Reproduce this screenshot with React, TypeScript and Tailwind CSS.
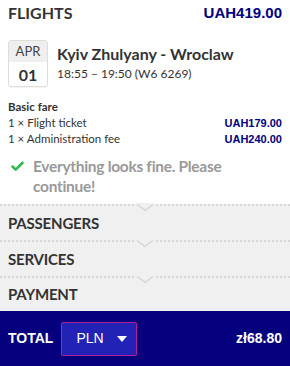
import { Check } from "lucide-react";

const sections = ["PASSENGERS", "SERVICES", "PAYMENT"];

function Notch() {
  return (
    <div className="absolute left-0 right-0 top-0 h-[8px]">
      <div className="absolute left-0 right-0 top-0 border-t-2 border-dotted border-[#d6d6d6]" />
      <svg className="absolute left-[136px] top-[-1px]" width="18" height="9" viewBox="0 0 18 9">
        <rect x="0" y="0" width="18" height="3" fill="#f0f0f0" />
        <path d="M1 1.5 L9 7.5 L17 1.5" fill="#f0f0f0" stroke="#d2d2d2" strokeWidth="1.2" />
      </svg>
    </div>
  );
}

export default function App() {
  return (
    <div className="w-[290px] h-[366px] flex flex-col bg-white text-[#333] font-['Lato','Noto_Sans',sans-serif] overflow-hidden">
      <div className="px-2 pt-[3px]">
        <div className="flex justify-between items-center">
          <h2 className="text-[16px] font-bold leading-[20px]">FLIGHTS</h2>
          <span className="text-[15px] font-bold text-[#000080] leading-[20px] font-['Liberation_Sans',Arial,sans-serif]">UAH419.00</span>
        </div>

        <div className="flex items-start gap-[9px] mt-[17px]">
          <div className="w-[40px] h-[47px] border border-[#ddd] rounded-[3px] overflow-hidden flex flex-col text-center shadow-[0_1px_1px_rgba(0,0,0,0.05)]">
            <div className="h-[21px] bg-[#efefef] text-[13px] leading-[21px] text-[#444]">APR</div>
            <div className="flex-1 text-[16px] font-bold leading-[25px]">01</div>
          </div>
          <div className="pt-[3px]">
            <div className="text-[16px] font-bold leading-[22px]">Kyiv Zhulyany - Wroclaw</div>
            <div className="text-[12px] leading-[16px] mt-[1px]">18:55 – 19:50 (W6 6269)</div>
          </div>
        </div>

        <div className="mt-[12px] text-[11.5px] leading-[16px]">
          <div className="font-bold">Basic fare</div>
          <div className="flex justify-between">
            <span>1 × Flight ticket</span>
            <span className="font-bold text-[#000080] text-[11px] font-['Liberation_Sans',Arial,sans-serif]">UAH179.00</span>
          </div>
          <div className="flex justify-between">
            <span>1 × Administration fee</span>
            <span className="font-bold text-[#000080] text-[11px] font-['Liberation_Sans',Arial,sans-serif]">UAH240.00</span>
          </div>
        </div>

        <div className="flex items-start gap-[8px] mt-[9px] pl-[2px]">
          <Check className="w-[15px] h-[15px] mt-[3px] text-[#2fb84d] shrink-0" strokeWidth={4} />
          <p className="max-w-[215px] text-[15.5px] tracking-[-0.3px] font-bold leading-[20px] text-[#999]">
            Everything looks fine. Please continue!
          </p>
        </div>
      </div>

      <div className="mt-auto bg-[#f0f0f0]">
        {sections.map((s, i) => (
          <div key={s} className={`relative px-2 ${i === 2 ? "h-[35px]" : "h-[36px]"} flex items-center pt-[2px]`}>
            <Notch />
            <span className="text-[15px] font-bold text-[#333] tracking-[-0.2px]">{s}</span>
          </div>
        ))}
      </div>

      <div className="h-[55px] bg-[#06007f] flex items-center px-2 font-['Liberation_Sans',Arial,sans-serif] text-white">
        <span className="text-[14px] font-bold">TOTAL</span>
        <div className="ml-[8px] w-[76px] h-[34px] bg-[#2222b6] border border-[#b0209a] rounded-[2px] flex items-center justify-between pl-[14px] pr-[9px]">
          <span className="text-[14px]">PLN</span>
          <svg width="10" height="6" viewBox="0 0 10 6">
            <path d="M0 0 L10 0 L5 6 Z" fill="white" />
          </svg>
        </div>
        <span className="ml-auto text-[14px] font-bold">zł68.80</span>
      </div>
    </div>
  );
}
